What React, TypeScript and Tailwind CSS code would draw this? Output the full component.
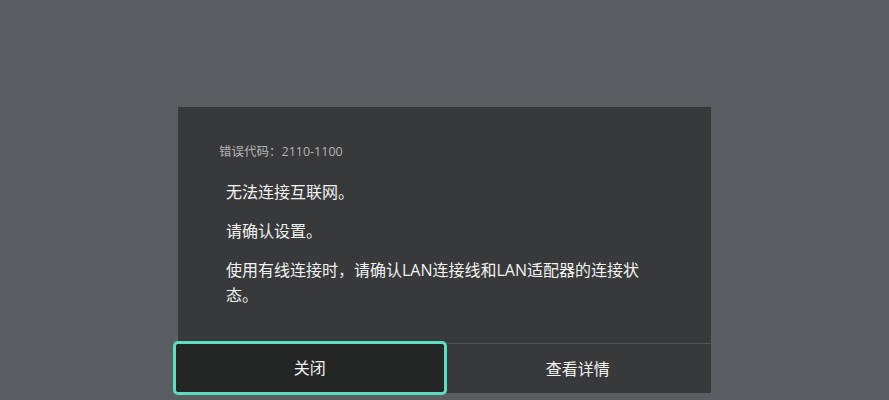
import React from 'react';

const font = '"Open Sans", "Noto Sans CJK SC", sans-serif';

export default function App() {
  return (
    <div className="w-[889px] h-[400px] bg-[#5b5e60] overflow-hidden flex flex-col items-center" style={{ fontFamily: font }}>
      <div className="mt-[107px] w-[533px] bg-[#38393a] flex flex-col">
        <div className="h-[236px] pt-[36px] pl-[41px]">
          <p className="text-[12.5px] leading-[18px] text-[#b4b5b5]">错误代码：2110-1100</p>
          <div className="mt-[19px] pl-[7px] w-[452px] text-[16px] leading-[25px] text-[#f2f2f2] flex flex-col gap-[14px]">
            <p>无法连接互联网。</p>
            <p>请确认设置。</p>
            <p>使用有线连接时，请确认LAN连接线和LAN适配器的连接状态。</p>
          </div>
        </div>
        <div className="h-[50px] border-t border-[#505253] flex">
          <div className="relative w-1/2">
            <button className="absolute -left-[5px] -top-[3px] -bottom-[2px] -right-[2px] rounded-[5px] border-[3px] border-[#5fdcbf] bg-[#242525] text-[16px] text-[#f2f2f2]">
              关闭
            </button>
          </div>
          <button className="w-1/2 text-[16px] text-[#f2f2f2]">查看详情</button>
        </div>
      </div>
    </div>
  );
}
